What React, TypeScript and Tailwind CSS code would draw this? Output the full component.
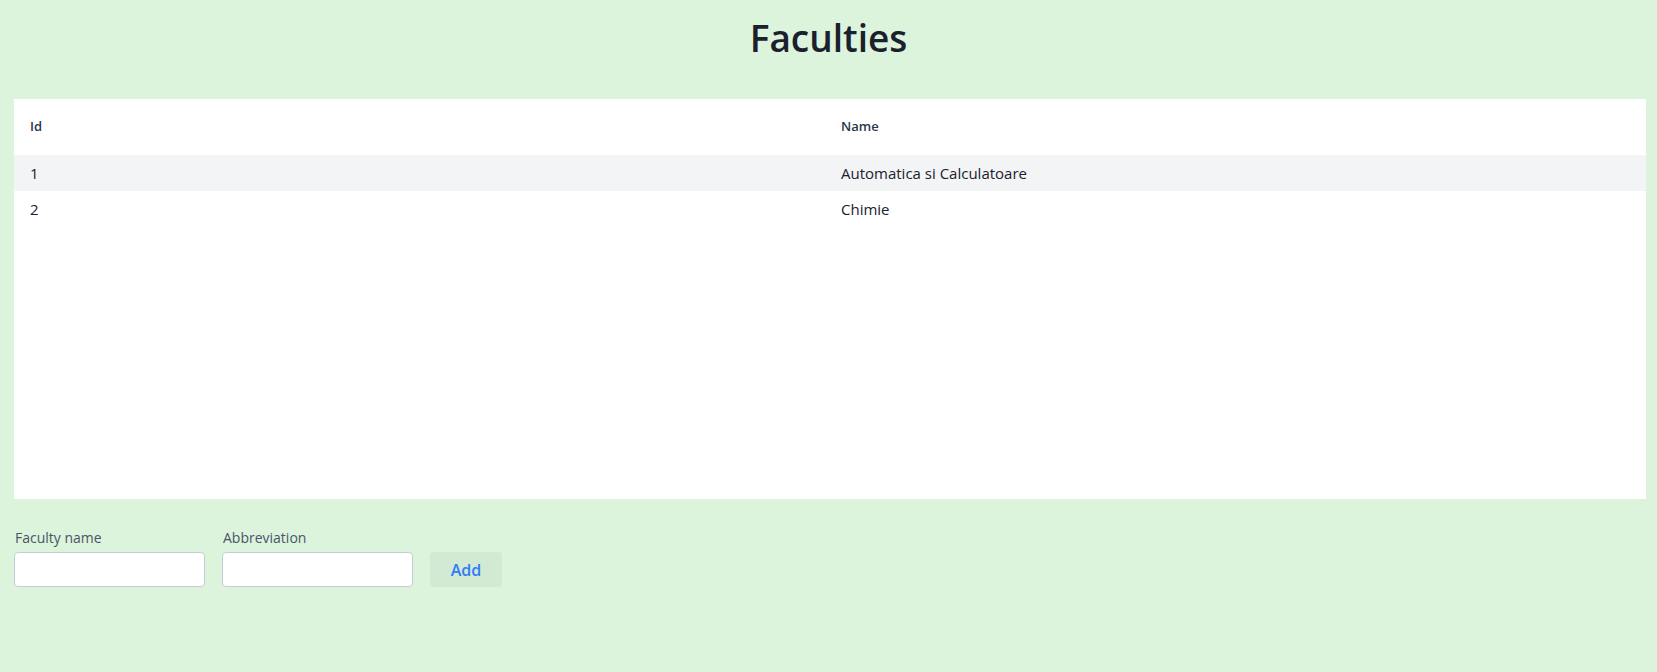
const faculties = [
  { id: 1, name: "Automatica si Calculatoare" },
  { id: 2, name: "Chimie" },
];

export default function App() {
  return (
    <div className="min-h-screen bg-[#dcf3dc] font-['Open_Sans',sans-serif] text-[#1a202c]">
      <h1 className="pt-[18px] text-center text-[37px] leading-[40px] font-semibold">
        Faculties
      </h1>

      {/* Table */}
      <div className="mt-[41px] ml-[14px] mr-[11px] h-[400px] bg-white">
        <table className="w-full table-fixed border-collapse">
          <colgroup>
            <col className="w-[811px]" />
            <col />
          </colgroup>
          <thead>
            <tr className="h-[56px]">
              <th className="px-4 text-left text-[13px] font-semibold text-[#2d3748]">Id</th>
              <th className="px-4 text-left text-[13px] font-semibold text-[#2d3748]">Name</th>
            </tr>
          </thead>
          <tbody>
            {faculties.map((f, i) => (
              <tr key={f.id} className={i % 2 === 0 ? "h-[36px] bg-[#f3f4f6]" : "h-[36px]"}>
                <td className="px-4 text-[15px]">{f.id}</td>
                <td className="px-4 text-[15px]">{f.name}</td>
              </tr>
            ))}
          </tbody>
        </table>
      </div>

      {/* Form */}
      <div className="mt-[29px] ml-[14px] flex items-end gap-[17px]">
        <div className="flex flex-col">
          <label className="mb-1 pl-px text-[14px] leading-5 font-medium text-[#4a5568]">Faculty name</label>
          <input className="h-[35px] w-[191px] rounded-[4px] border border-[#c8cbd3] bg-white px-3 outline-none" />
        </div>
        <div className="flex flex-col">
          <label className="mb-1 pl-px text-[14px] leading-5 font-medium text-[#4a5568]">Abbreviation</label>
          <input className="h-[35px] w-[191px] rounded-[4px] border border-[#c8cbd3] bg-white px-3 outline-none" />
        </div>
        <button className="h-[35px] w-[72px] rounded-[4px] bg-[#d2e9d4] text-[16px] font-semibold text-[#2f7cf6]">
          Add
        </button>
      </div>
    </div>
  );
}
